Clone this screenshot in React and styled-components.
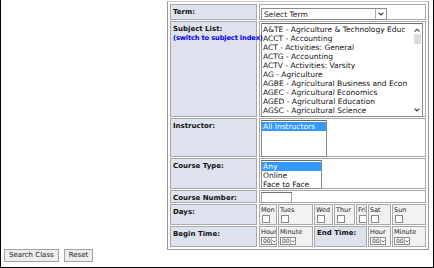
import styled, { createGlobalStyle } from 'styled-components';

const GlobalStyle = createGlobalStyle`
  html, body { margin: 0; padding: 0; background: #fff; }
  body { font-family: "DejaVu Sans", Verdana, sans-serif; }
`;

const Page = styled.div`
  box-sizing: border-box;
  width: 434px;
  height: 268px;
  border: 1px solid #000;
  border-top: none;
  display: flex;
  flex-direction: column;
  padding: 1px 4px 0 2px;
`;

const Form = styled.div`
  align-self: flex-end;
  box-sizing: border-box;
  width: 262px;
  display: grid;
  grid-template-columns: 87px 1fr;
  grid-template-rows: 16px 96px 39px 31px 13px 21px 21px;
  gap: 1px 2px;
  padding: 2px;
  border: 1px solid #9a9a9a;
  border-top-color: #c8c8c8;
`;

const Label = styled.div`
  box-sizing: border-box;
  background: #dde2ec;
  border: 1px solid #a8a8a8;
  padding: 3px 1px 0 2px;
  font-size: 7px;
  font-weight: bold;
  color: #111;
  line-height: 9px;
  white-space: nowrap;
  position: relative;
  z-index: 1;
`;

const Link = styled.div`
  color: #0000ee;
  font-size: 6.7px;
  letter-spacing: -0.15px;
`;

const Value = styled.div`
  box-sizing: border-box;
  border: 1px solid #a8a8a8;
  padding: 1px;
  min-width: 0;
  display: flex;
  align-items: flex-start;
`;

const Dropdown = styled.div`
  box-sizing: border-box;
  width: ${(p) => p.$w}px;
  height: ${(p) => p.$h}px;
  border: 1px solid #8c8c8c;
  background: #fff;
  display: flex;
  align-items: center;
  justify-content: space-between;
  font-size: ${(p) => p.$fs}px;
  color: #222;
  padding-left: ${(p) => p.$pl || 2}px;
  margin-top: ${(p) => p.$mt || 0}px;
`;

const Arrow = styled.span`
  box-sizing: border-box;
  width: ${(p) => p.$w}px;
  height: 100%;
  border-left: 1px solid #b0b0b0;
  display: flex;
  align-items: center;
  justify-content: center;
`;

const ListBox = styled.div`
  box-sizing: border-box;
  width: ${(p) => p.$w}px;
  height: ${(p) => p.$h}px;
  border: 1px solid #8c8c8c;
  border-top-color: #6a6a6a;
  background: #fff;
  display: flex;
  overflow: hidden;
`;

const Options = styled.div`
  flex: 1;
  min-width: 0;
  padding-top: 1px;
`;

const Option = styled.div`
  font-size: 7.5px;
  line-height: 9px;
  height: 9px;
  white-space: nowrap;
  padding-left: 1px;
  color: ${(p) => (p.$selected ? '#fff' : '#111')};
  background: ${(p) => (p.$selected ? '#3399ff' : 'transparent')};
`;

const Scrollbar = styled.div`
  width: 10px;
  display: flex;
  flex-direction: column;
  align-items: center;
  justify-content: space-between;
  padding: 4px 0;
`;

const Thumb = styled.div`
  width: 7px;
  height: 10px;
  background: #dcdcdc;
  margin-top: 2px;
  margin-bottom: auto;
`;

const TextBox = styled.div`
  box-sizing: border-box;
  width: 31px;
  height: 11px;
  border: 1px solid #a0a0a0;
  border-top-color: #707070;
  background: #fff;
`;

const TimeGrid = styled.div`
  display: grid;
  grid-column: 2;
  grid-row: 6 / span 2;
  grid-template-columns: 18px 35px 19px 21px 11px 23px 1fr;
  grid-template-rows: 21px 21px;
  gap: 1px 1px;
`;

const SubCell = styled.div`
  box-sizing: border-box;
  grid-column: span ${(p) => p.$span || 1};
  border: 1px solid #a8a8a8;
  background: #f2f2f2;
  padding: 1px 1px;
  font-size: 6.5px;
  line-height: 8px;
  color: #222;
  display: flex;
  flex-direction: column;
  align-items: flex-start;
  white-space: nowrap;
  overflow: hidden;
`;

const SubLabel = styled(SubCell)`
  background: #dde2ec;
  font-weight: bold;
  font-size: 7px;
  padding: 2px 2px;
  color: #111;
`;

const Check = styled.span`
  box-sizing: border-box;
  width: 8px;
  height: 8px;
  margin: 1px 0 0 1px;
  border: 1px solid #8a8a8a;
  background: #fff;
`;

const Buttons = styled.div`
  display: flex;
  gap: 5px;
  margin-top: -1px;
  padding-left: 1px;
`;

const Button = styled.div`
  box-sizing: border-box;
  height: 13px;
  padding: 0 4px;
  border: 1px solid #a3a3a3;
  background: #ededed;
  font-size: 7px;
  line-height: 11px;
  color: #222;
`;

const Chevron = ({ up, size = 6 }) => (
  <svg width={size} height={size * 0.7} viewBox="0 0 10 7">
    <path
      d={up ? 'M1 6 L5 2 L9 6' : 'M1 1 L5 5 L9 1'}
      fill="none"
      stroke="#333"
      strokeWidth="1.8"
    />
  </svg>
);

const subjects = [
  'A&TE - Agriculture & Technology Educ',
  'ACCT - Accounting',
  'ACT - Activities: General',
  'ACTG - Accounting',
  'ACTV - Activities: Varsity',
  'AG - Agriculture',
  'AGBE - Agricultural Business and Econ',
  'AGEC - Agricultural Economics',
  'AGED - Agricultural Education',
  'AGSC - Agricultural Science',
];

const days = ['Mon', 'Tues', 'Wed', 'Thur', 'Fri', 'Sat', 'Sun'];

const TimeSelect = () => (
  <Dropdown $w={16} $h={8} $fs={6} $mt={1} $pl={1}>
    00
    <Arrow $w={6}>
      <Chevron size={4} />
    </Arrow>
  </Dropdown>
);

export default function App() {
  return (
    <Page>
      <GlobalStyle />
      <Form>
        <Label>Term:</Label>
        <Value>
          <Dropdown $w={126} $h={12} $fs={7.5} $mt={2}>
            Select Term
            <Arrow $w={11}>
              <Chevron size={6} />
            </Arrow>
          </Dropdown>
        </Value>

        <Label>
          Subject List:
          <Link>(switch to subject index)</Link>
        </Label>
        <Value>
          <ListBox $w={162} $h={94}>
            <Options>
              {subjects.map((s) => (
                <Option key={s}>{s}</Option>
              ))}
            </Options>
            <Scrollbar>
              <Chevron up size={6} />
              <Thumb />
              <Chevron size={6} />
            </Scrollbar>
          </ListBox>
        </Value>

        <Label>Instructor:</Label>
        <Value>
          <ListBox $w={66} $h={37}>
            <Options>
              <Option $selected>All Instructors</Option>
            </Options>
          </ListBox>
        </Value>

        <Label>Course Type:</Label>
        <Value>
          <ListBox $w={61} $h={29}>
            <Options>
              <Option $selected>Any</Option>
              <Option>Online</Option>
              <Option>Face to Face</Option>
            </Options>
          </ListBox>
        </Value>

        <Label>Course Number:</Label>
        <Value>
          <TextBox />
        </Value>

        <Label>Days:</Label>
        <Label style={{ gridColumn: 1, gridRow: 7 }}>Begin Time:</Label>
        <TimeGrid>
          {days.map((d) => (
            <SubCell key={d}>
              {d}
              <Check />
            </SubCell>
          ))}
          <SubCell>
            Hour
            <TimeSelect />
          </SubCell>
          <SubCell>
            Minute
            <TimeSelect />
          </SubCell>
          <SubLabel $span={3}>End Time:</SubLabel>
          <SubCell>
            Hour
            <TimeSelect />
          </SubCell>
          <SubCell>
            Minute
            <TimeSelect />
          </SubCell>
        </TimeGrid>
      </Form>
      <Buttons>
        <Button>Search Class</Button>
        <Button>Reset</Button>
      </Buttons>
    </Page>
  );
}
